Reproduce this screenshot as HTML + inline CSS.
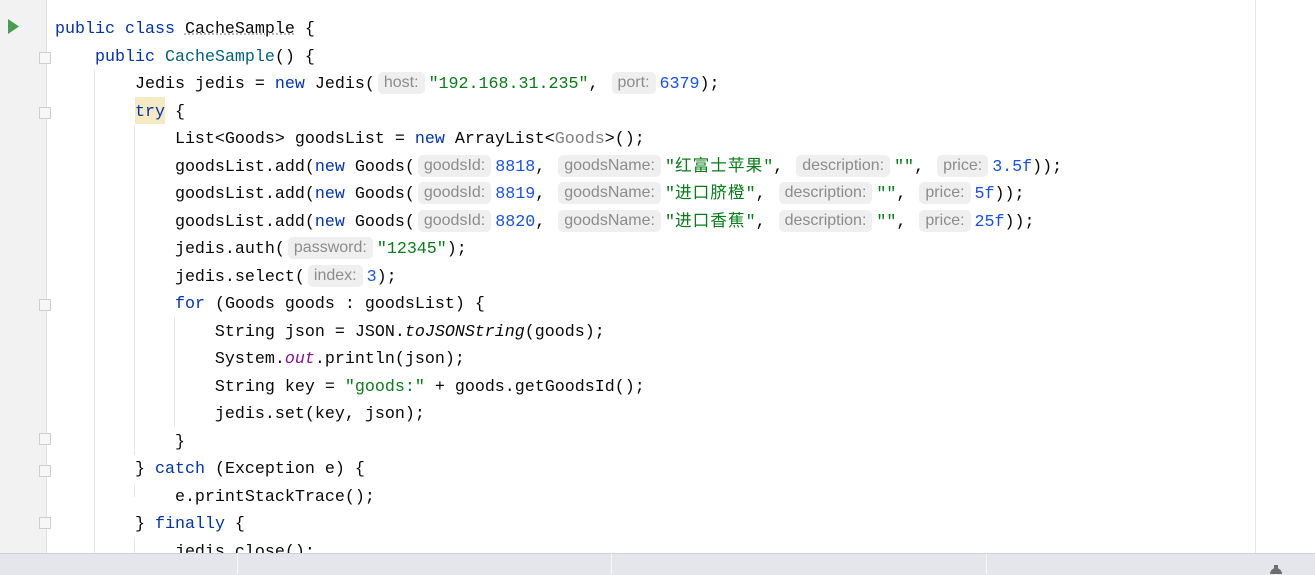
<!DOCTYPE html><html><head><meta charset="utf-8"><style>
body{margin:0;width:1315px;height:574px;overflow:hidden;background:#fff;position:relative;font-family:"Liberation Mono","Noto Sans CJK SC",monospace;}
.g{position:absolute;left:0;top:0;width:46px;height:553px;background:#f2f2f2;border-right:1px solid #e0e0e0}
.rm{position:absolute;left:1255px;top:0;width:1px;height:553px;background:#e6e6e6}
.ig{position:absolute;width:1px;background:#e8e8e8}
.code{position:absolute;left:55px;top:16px;font-size:16.67px;line-height:27.5px;color:#080808;white-space:pre}
.k{color:#0033b3}.s{color:#067d17}.n{color:#1750eb}.c{color:#00627a}.o{color:#871094;font-style:italic}.i{font-style:italic}
.h{display:inline-block;font-family:"Liberation Sans","Noto Sans CJK SC",sans-serif;font-size:16px;color:#8c8c8c;background:#efefef;border-radius:5px;padding:0 6px;margin:0 4px 0 3px;line-height:22px;vertical-align:1px}
.z{letter-spacing:1px}
.bar{position:absolute;left:0;top:553px;width:1315px;height:21px;background:#e4e6eb;border-top:1px solid #d0d0d0}
.d{position:absolute;top:553px;width:1px;height:21px;background:#f6f6f6}
.f{position:absolute;left:39px;width:12px;height:12px;border:1px solid #cfcfcf;background:#f7f7f7;box-sizing:border-box}
</style></head><body>
<div class="g"></div>
<svg style="position:absolute;left:8px;top:19px" width="12" height="16"><path d="M0 0 L11 7.5 L0 15Z" fill="#499c54"/></svg>
<div class="f" style="top:52px"></div><div class="f" style="top:107px"></div><div class="f" style="top:299px"></div>
<div class="f" style="top:433px"></div><div class="f" style="top:465px"></div><div class="f" style="top:517px"></div>
<div class="rm"></div>
<div class="ig" style="left:94px;top:70px;height:483px"></div>
<div class="ig" style="left:134px;top:125px;height:330px"></div>
<div class="ig" style="left:134px;top:483px;height:14px"></div>
<div class="ig" style="left:134px;top:538px;height:15px"></div>
<div class="ig" style="left:174px;top:317px;height:110px"></div>
<div style="position:absolute;left:135px;top:97px;width:30px;height:27px;background:#f5eac1"></div>
<div class="code"><span class="k">public class</span> <span style="text-decoration:underline dotted #aaa">CacheSample</span> {
    <span class="k">public</span> <span class="c">CacheSample</span>() {
        Jedis jedis = <span class="k">new</span> Jedis(<span class="h">host:</span><span class="s">"192.168.31.235"</span>, <span class="h">port:</span><span class="n">6379</span>);
        <span class="k">try</span> {
            List&lt;Goods&gt; goodsList = <span class="k">new</span> ArrayList&lt;<span style="color:#808080">Goods</span>&gt;();
            goodsList.add(<span class="k">new</span> Goods(<span class="h">goodsId:</span><span class="n">8818</span>, <span class="h">goodsName:</span><span class="s">"<span class="z">红富士苹果</span>"</span>, <span class="h">description:</span><span class="s">""</span>, <span class="h">price:</span><span class="n">3.5f</span>));
            goodsList.add(<span class="k">new</span> Goods(<span class="h">goodsId:</span><span class="n">8819</span>, <span class="h">goodsName:</span><span class="s">"<span class="z">进口脐橙</span>"</span>, <span class="h">description:</span><span class="s">""</span>, <span class="h">price:</span><span class="n">5f</span>));
            goodsList.add(<span class="k">new</span> Goods(<span class="h">goodsId:</span><span class="n">8820</span>, <span class="h">goodsName:</span><span class="s">"<span class="z">进口香蕉</span>"</span>, <span class="h">description:</span><span class="s">""</span>, <span class="h">price:</span><span class="n">25f</span>));
            jedis.auth(<span class="h">password:</span><span class="s">"12345"</span>);
            jedis.select(<span class="h">index:</span><span class="n">3</span>);
            <span class="k">for</span> (Goods goods : goodsList) {
                String json = JSON.<span class="i">toJSONString</span>(goods);
                System.<span class="o">out</span>.println(json);
                String key = <span class="s">"goods:"</span> + goods.getGoodsId();
                jedis.set(key, json);
            }
        } <span class="k">catch</span> (Exception e) {
            e.printStackTrace();
        } <span class="k">finally</span> {
            jedis.close();</div>
<div class="bar"></div>
<div class="d" style="left:237px"></div><div class="d" style="left:611px"></div><div class="d" style="left:986px"></div>
<svg style="position:absolute;left:1267px;top:565px" width="18" height="9"><circle cx="9" cy="9" r="6" fill="#6e6e6e"/><rect x="7" y="0" width="4" height="4" fill="#6e6e6e"/></svg>
</body></html>
